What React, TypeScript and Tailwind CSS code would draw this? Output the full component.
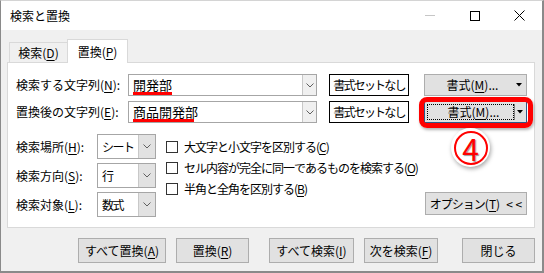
import React from "react";

const Chevron = () => (
  <svg width="8" height="5" viewBox="0 0 8 5" className="block">
    <path d="M0.5 0.5 L4 4 L7.5 0.5" fill="none" stroke="#606060" strokeWidth="1" />
  </svg>
);

const Tri = () => (
  <svg width="6" height="4" viewBox="0 0 6 4" className="block">
    <path d="M0 0 L6 0 L3 3.5 Z" fill="#000" />
  </svg>
);

function Combo({ text, underline }: { text: string; underline: string }) {
  return (
    <div className="relative flex h-[22px] w-[189px] items-center border border-[#a6a6a6] bg-white">
      <span className="-mt-[2px] pl-[4px] text-[13px] leading-none">{text}</span>
      <div className={`absolute left-[4px] top-[17px] h-[3px] bg-[#ff0000] ${underline}`} />
      <div className="ml-auto flex h-full w-[14px] items-center justify-center border-l border-[#c8c8c8] bg-[#f0f0f0]">
        <Chevron />
      </div>
    </div>
  );
}

function Sel({ text }: { text: string }) {
  return (
    <div className="flex h-[25px] w-[59px] items-center border border-[#a6a6a6] bg-white">
      <span className="whitespace-nowrap pl-[4px] text-[12px] leading-none tracking-[-1.5px]">{text}</span>
      <div className="ml-auto flex h-full w-[17px] shrink-0 items-center justify-center border-l border-[#c8c8c8] bg-[#e2e2e2]">
        <Chevron />
      </div>
    </div>
  );
}

function Check({ children }: { children: React.ReactNode }) {
  return (
    <div className="flex h-[21px] items-center">
      <div className="h-[12px] w-[12px] shrink-0 border border-[#333333] bg-white" />
      <span className="ml-[6px] whitespace-nowrap text-[12px] leading-none tracking-[-1px]">{children}</span>
    </div>
  );
}

function Btn({ w, children, ml }: { w: string; ml: string; children: React.ReactNode }) {
  return (
    <div className={`flex h-[25px] items-center justify-center whitespace-nowrap border border-[#adadad] bg-[#e1e1e1] text-[12px] leading-none ${w} ${ml}`}>
      {children}
    </div>
  );
}

export default function App() {
  return (
    <div className="relative h-[273px] w-[544px] overflow-hidden border-b-2 border-l border-r-2 border-t border-[#8a8a8a] border-t-[#d4d4d4] bg-[#f0f0f0] font-['Noto_Sans_CJK_JP',sans-serif] text-black">
      {/* title bar */}
      <div className="flex h-[29px] items-center bg-white">
        <span className="pl-[9px] text-[12px] leading-none">検索と置換</span>
        <div className="ml-auto flex h-full">
          <div className="flex w-[45px] items-center justify-center">
            <div className="h-px w-[10px] bg-[#c6c6c6]" />
          </div>
          <div className="flex w-[45px] items-center justify-center">
            <div className="h-[10px] w-[10px] border border-black" />
          </div>
          <div className="flex w-[45px] items-center justify-center">
            <svg width="11" height="11" viewBox="0 0 11 11">
              <path d="M0.5 0.5 L10.5 10.5 M10.5 0.5 L0.5 10.5" stroke="#000" strokeWidth="1" />
            </svg>
          </div>
        </div>
      </div>

      {/* body */}
      <div className="pl-[6px]">
        {/* tabs */}
        <div className="mt-[9px] flex h-[23px] items-end pl-[2px]">
          <div className="flex h-[20px] w-[58px] items-center justify-center border border-b-0 border-r-0 border-[#d9d9d9] bg-[#f0f0f0] text-[12px] leading-none">
            検索(<u className="underline-offset-2">D</u>)
          </div>
          <div className="relative z-10 -mb-px flex h-[24px] w-[61px] items-center justify-center border border-b-0 border-[#d9d9d9] bg-white text-[12px] leading-none">
            置換(<u className="underline-offset-2">P</u>)
          </div>
        </div>

        {/* panel */}
        <div className="h-[166px] w-[528px] border border-[#d9d9d9] bg-white pl-[8px] pt-[11px]">
          {/* row 1 */}
          <div className="flex h-[22px] items-center">
            <span className="w-[112px] whitespace-nowrap text-[12px] leading-none">
              検索する文字列(<u className="underline-offset-2">N</u>):
            </span>
            <Combo text="開発部" underline="w-[39px]" />
            <div className="ml-[12px] flex h-[22px] w-[80px] items-center justify-center whitespace-nowrap border border-black bg-white text-[12px] leading-none tracking-[-1.8px]">
              書式セットなし
            </div>
            <div className="ml-[15px] flex h-[22px] w-[103px] items-center border border-[#adadad] bg-[#e1e1e1] text-[12px] leading-none">
              <span className="flex-1 whitespace-nowrap pl-[8px] text-center">
                書式(<u className="underline-offset-2">M</u>)...
              </span>
              <div className="flex w-[14px] justify-center">
                <Tri />
              </div>
            </div>
          </div>
          {/* row 2 */}
          <div className="mt-[5px] flex h-[22px] items-center">
            <span className="w-[112px] whitespace-nowrap text-[12px] leading-none">
              置換後の文字列(<u className="underline-offset-2">E</u>):
            </span>
            <Combo text="商品開発部" underline="w-[61px]" />
            <div className="ml-[12px] flex h-[22px] w-[80px] items-center justify-center whitespace-nowrap border border-black bg-white text-[12px] leading-none tracking-[-1.8px]">
              書式セットなし
            </div>
            <div className="ml-[15px] flex h-[22px] w-[103px] items-center border border-[#2a5a8a] bg-[#e1e1e1] p-[2px] text-[12px] leading-none">
              <div className="flex h-full flex-1 items-center justify-center whitespace-nowrap border border-dotted border-black pl-[6px]">
                書式(<u className="underline-offset-2">M</u>)...
              </div>
              <div className="flex h-full w-[10px] items-center justify-center border-l border-[#808080]">
                <Tri />
              </div>
            </div>
          </div>

          {/* lower */}
          <div className="mt-[11px] flex">
            <div className="flex flex-col gap-[4px]">
              <div className="flex items-center">
                <span className="w-[81px] whitespace-nowrap text-[12px] leading-none">
                  検索場所(<u className="underline-offset-2">H</u>):
                </span>
                <Sel text="シート" />
              </div>
              <div className="flex items-center">
                <span className="w-[81px] whitespace-nowrap text-[12px] leading-none">
                  検索方向(<u className="underline-offset-2">S</u>):
                </span>
                <Sel text="行" />
              </div>
              <div className="flex items-center">
                <span className="w-[81px] whitespace-nowrap text-[12px] leading-none">
                  検索対象(<u className="underline-offset-2">L</u>):
                </span>
                <Sel text="数式" />
              </div>
            </div>
            <div className="ml-[10px] flex flex-col pt-[2px]">
              <Check>
                大文字と小文字を区別する(<u className="underline-offset-2">C</u>)
              </Check>
              <Check>
                セル内容が完全に同一であるものを検索する(<u className="underline-offset-2">O</u>)
              </Check>
              <Check>
                半角と全角を区別する(<u className="underline-offset-2">B</u>)
              </Check>
            </div>
            <div className="ml-auto mr-[7px] flex flex-col justify-end pb-[2px]">
              <div className="flex h-[23px] w-[102px] items-center justify-center whitespace-nowrap border border-[#adadad] bg-[#e1e1e1] text-[12px] leading-none">
                <span className="tracking-[-1px]">オプション</span>(<u className="underline-offset-2">T</u>)<span className="ml-[6px]">&lt; &lt;</span>
              </div>
            </div>
          </div>
        </div>
      </div>

      {/* bottom buttons */}
      <div className="mt-[10px] flex pl-[77px]">
        <Btn w="w-[88px]" ml="">
          すべて置換(<u className="underline-offset-2">A</u>)
        </Btn>
        <Btn w="w-[73px]" ml="ml-[10px]">
          置換(<u className="underline-offset-2">R</u>)
        </Btn>
        <Btn w="w-[85px]" ml="ml-[20px]">
          すべて検索(<u className="underline-offset-2">I</u>)
        </Btn>
        <Btn w="w-[74px]" ml="ml-[10px]">
          次を検索(<u className="underline-offset-2">F</u>)
        </Btn>
        <Btn w="w-[73px]" ml="ml-[24px]">
          閉じる
        </Btn>
      </div>

      {/* annotation overlays */}
      <div className="absolute left-[418px] top-[96px] h-[31px] w-[114px] rounded-[8px] border-[5px] border-[#ff0000] shadow-[1px_2px_3px_rgba(0,0,0,0.3)]" />
      <div className="absolute left-[450px] top-[127px] flex h-[39px] w-[39px] items-center justify-center rounded-full bg-white shadow-[1px_2px_4px_rgba(0,0,0,0.35)]">
        <div className="flex h-[34px] w-[34px] items-center justify-center rounded-full border-2 border-[#ff0000] text-[30px] leading-none text-[#ff0000] [text-shadow:1px_1px_1px_#9a9a9a]">
          4
        </div>
      </div>
    </div>
  );
}
